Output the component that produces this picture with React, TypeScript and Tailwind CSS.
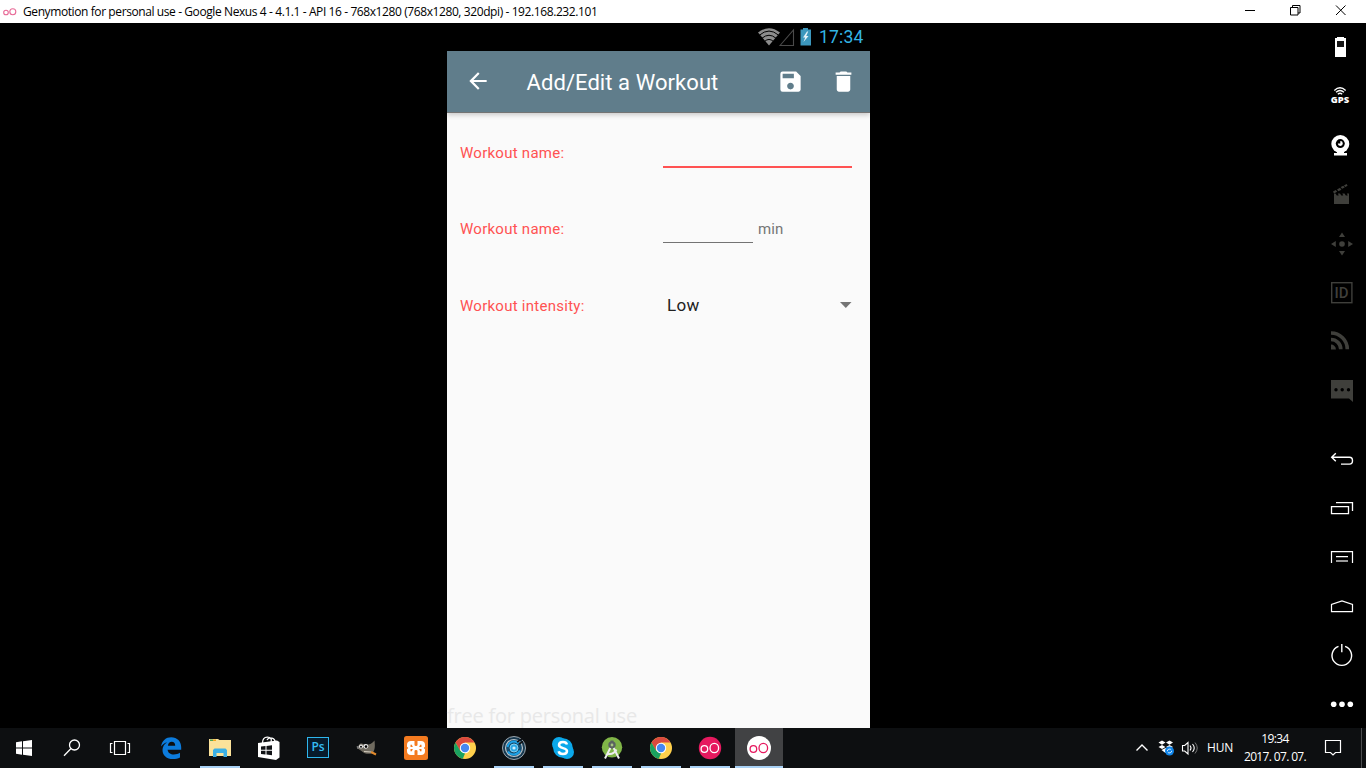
import type { ReactNode } from 'react';
import { MdArrowBack, MdDelete, MdSave } from 'react-icons/md';

function SideIcon({ children }: { children: ReactNode }) {
  return (
    <svg className="block h-[49px] w-6 shrink-0" viewBox="0 0 24 49" fill="none">
      {children}
    </svg>
  );
}

function Sidebar() {
  return (
    <div className="flex w-9 shrink-0 flex-col">
      <SideIcon>
        <path d="M7 14h7v1h2v19H5V15h2z" fill="#fff" />
        <path d="M7 18h7v6H7z" fill="#161616" />
      </SideIcon>
      <SideIcon>
        <path d="M4.3 18.4Q10 13.2 15.7 18.4M6 20.3Q10 16.8 14 20.3M7.8 22.2Q10 20.3 12.2 22.2" stroke="#fff" strokeWidth="1.3" />
        <text x="0.7" y="31.4" textLength="18.4" lengthAdjust="spacingAndGlyphs" fill="#fff" className="font-['Open_Sans',sans-serif] text-[8.4px] font-extrabold">GPS</text>
      </SideIcon>
      <SideIcon>
        <circle cx="10.3" cy="23" r="9" fill="#fff" />
        <path d="M7 30h7v2h3v2.500H4V32h3z" fill="#fff" />
        <circle cx="10.3" cy="22.6" r="4.5" fill="#000" />
        <path d="M10.3 22.6V20a2.5 2.5 0 1 1-2.5 2.6z" fill="#fff" />
      </SideIcon>
      <SideIcon>
        <path d="M4 23.5h1.500l1.300 2h2l-1-2H10l1.300 2h2l-1-2h2.200l1.300 2h2l-1-2H19V34H4z" fill="#3f3f3b" />
        <path d="M3 21.5l2.8-1.5 1.4 1.8-3.200 1.800zM7 19.400l3-1.600 1.400 1.900-3 1.500zM10.700 17l2.600-1.300 1.400 1.800-2.600 1.300zM14 15.400l2.600-1.300 1 1.700-2.400 1.300z" fill="#3f3f3b" />
      </SideIcon>
      <SideIcon>
        <circle cx="12" cy="25" r="2.8" fill="#3f3f3b" />
        <path d="M12 13.500l3 4.500h-6zM12 36.500l3-4.500h-6zM1 25l4.800-3v6zM23 25l-4.800-3v6z" fill="#3f3f3b" />
      </SideIcon>
      <SideIcon>
        <rect x="1.7" y="14.7" width="20.2" height="20" stroke="#3f3f3b" strokeWidth="1.4" />
        <text x="4.500" y="30" textLength="14" lengthAdjust="spacingAndGlyphs" fill="#3f3f3b" className="font-['Roboto',sans-serif] text-[15px] font-medium">ID</text>
      </SideIcon>
      <SideIcon>
        <path d="M1 27.500a4.900 4.900 0 0 1 4.900 4.900H1z" fill="#3f3f3b" />
        <path d="M1 22.500a9.800 9.800 0 0 1 9.800 9.800M1 16a16.300 16.300 0 0 1 16.300 16.300" stroke="#3f3f3b" strokeWidth="3.600" />
      </SideIcon>
      <SideIcon>
        <path d="M1 14h22v22l-4-3.4H1z" fill="#3f3f3b" />
        <g fill="#000"><circle cx="6" cy="23.7" r="1.7" /><circle cx="12.2" cy="23.7" r="1.7" /><circle cx="18.5" cy="23.7" r="1.7" /></g>
      </SideIcon>
      <div className="h-5 shrink-0" />
      <SideIcon>
        <path d="M5.8 18.2L1.7 22.2l4.1 4M2 22.3h17.5q3 0 3 3.4t-3 3.4H11" stroke="#fff" strokeWidth="1.4" />
      </SideIcon>
      <SideIcon>
        <path d="M1.5 22.7h17v7h-17z" stroke="#fff" strokeWidth="1.3" />
        <path d="M6 18.7h16.5V27" stroke="#fff" strokeWidth="1.3" />
      </SideIcon>
      <SideIcon>
        <path d="M1.5 30V18.6h21V30M6 23.7h12" stroke="#fff" strokeWidth="1.2" />
        <path d="M6 28h12" stroke="#aaa" strokeWidth="1.8" />
      </SideIcon>
      <SideIcon>
        <path d="M1.5 29.6v-7.2L12 19l10.5 3.4v7.2z" stroke="#fff" strokeWidth="1.2" />
      </SideIcon>
      <SideIcon>
        <path d="M8.5 15.3a9.8 9.8 0 1 0 6.600 0M11.8 13v8.3" stroke="#fff" strokeWidth="1.4" />
      </SideIcon>
      <SideIcon>
        <g fill="#fff"><circle cx="3.7" cy="24.3" r="2.8" /><circle cx="12" cy="24.3" r="2.8" /><circle cx="20.3" cy="24.3" r="2.8" /></g>
      </SideIcon>
    </div>
  );
}

function Label({ children }: { children: ReactNode }) {
  return <span className="w-[203px] shrink-0 text-[15px] tracking-[0.26px] text-[#ff5252]">{children}</span>;
}

function Phone() {
  return (
    <div className="flex w-[423px] flex-col bg-[#fafafa] font-['Roboto',sans-serif]">
      <div className="flex h-7 shrink-0 items-center justify-end bg-black pr-1.5">
        <svg className="block h-7 w-[62px]" viewBox="0 0 62 28">
          <path d="M5 9.5Q16 .8 27 9.5L16 22.5z" fill="#8c8c8c" />
          <path d="M6.5 12.1Q16 4 25.5 12.1M9 15.2Q16 9.3 23 15.2M11.7 18.3Q16 14.6 20.3 18.3" fill="none" stroke="#000" strokeWidth="1" />
          <path d="M27 22.5L40.500 7v15.500z" fill="none" stroke="#4a4a4a" strokeWidth="1.1" />
          <path d="M50 5h5v1.500h3V22.500H47.500V6.500H50z" fill="#3c97bd" />
          <path d="M54 8.500L50 14.500h2.200L50.500 19l5-6h-2.300l2-4.500z" fill="#e4f2f8" />
        </svg>
        <span className="ml-1 w-[45px] whitespace-nowrap text-[17.500px] leading-7 tracking-[0.2px] text-[#33b5e5]">17:34</span>
      </div>
      <div className="flex h-[62px] shrink-0 items-center border-b border-[#737373] bg-[#607d8b] text-white shadow-[0_2px_5px_rgba(0,0,0,0.2)]">
        <MdArrowBack className="mb-px ml-[18px] h-[26px] w-[26px] shrink-0" />
        <span className="ml-[35.500px] mt-0.5 w-[240px] whitespace-nowrap text-[22px] tracking-[0.07px]">Add/Edit a Workout</span>
        <MdSave className="ml-[10.500px] h-[27px] w-[27px] shrink-0" />
        <MdDelete className="ml-[26px] h-[27px] w-[27px] shrink-0" />
      </div>
      <div className="flex h-[76px] shrink-0 items-center pl-[13px] pt-1">
        <Label>Workout name:</Label>
        <div className="mt-[28px] h-0.5 w-[189px] bg-[#ff5252]" />
      </div>
      <div className="flex h-[76px] shrink-0 items-center pl-[13px] pt-1">
        <Label>Workout name:</Label>
        <div className="mt-[27px] h-px w-[90px] bg-[#737373]" />
        <span className="ml-[5px] text-[15px] tracking-[0.1px] text-[#757575]">min</span>
      </div>
      <div className="flex h-[77px] shrink-0 items-center pl-[13px] pt-[5px]">
        <Label>Workout intensity:</Label>
        <span className="ml-1 w-[173px] text-[17px] tracking-[0.3px] text-[#212121]">Low</span>
        <svg className="mb-[3px] block h-1.5 w-3" viewBox="0 0 12 6"><path d="M0 0h11.500L5.800 6z" fill="#757575" /></svg>
      </div>
      <div className="mt-auto h-[26px] whitespace-nowrap font-['Open_Sans',sans-serif] text-[20px] font-medium leading-[28px] tracking-[-0.22px] text-[#e8e8e8]">free for personal use</div>
    </div>
  );
}

function Chrome() {
  return (
    <svg className="block h-6 w-6" viewBox="0 0 24 24">
      <circle cx="12" cy="12" r="11" fill="#ffd04c" />
      <path d="M2.500 6.500a11 11 0 0 1 19 0H12L7 14.800z" fill="#db4a3e" />
      <path d="M2.500 6.500L7.200 14.800 12 17.500l-2.200 5.300A11 11 0 0 1 2.500 6.500z" fill="#1aa260" />
      <circle cx="12" cy="12" r="5.200" fill="#fff" />
      <circle cx="12" cy="12" r="4.200" fill="#4688f1" />
    </svg>
  );
}

function Genymotion({ active }: { active?: boolean }) {
  return (
    <svg className="block h-6 w-6" viewBox="0 0 24 24">
      <circle cx="12" cy="12" r={active ? 12 : 11.2} fill={active ? '#fff' : '#e6195f'} />
      <g fill="none" stroke={active ? '#e6195f' : '#fff'} strokeWidth="1.300"><circle cx="6.400" cy="13" r="3.300" /><ellipse cx="16.300" cy="12" rx="4.300" ry="4.600" /></g>
    </svg>
  );
}

function Task({ children, running, active }: { children: ReactNode; running?: boolean; active?: boolean }) {
  return (
    <div className={active ? 'flex h-10 w-12 flex-col items-center bg-[#414244]' : 'flex h-10 w-12 flex-col items-center'}>
      <div className="flex h-[38px] items-center pt-0.5">{children}</div>
      {running && <div className={active ? 'h-0.5 w-12 bg-[#a9d1f5]' : 'h-0.5 w-10 bg-[#a9d1f5]'} />}
    </div>
  );
}

function Taskbar() {
  return (
    <div className="flex h-10 shrink-0 justify-between bg-[#0d0f11]">
      <div className="flex">
        <Task>
          <svg className="block h-6 w-6" viewBox="0 0 24 24" fill="#fff"><path d="M4 6.200l6-.9v6.200H4zM11 5.200L20 4v7.500h-9zM4 12.500h6v6.200l-6-.9zM11 12.500h9V20l-9-1.200z" /></svg>
        </Task>
        <Task>
          <svg className="block h-6 w-6" viewBox="0 0 24 24" fill="none" stroke="#fff" strokeWidth="1.300"><circle cx="14.500" cy="9" r="5" /><path d="M11 12.500L4 19.700" /></svg>
        </Task>
        <Task>
          <svg className="block h-6 w-6" viewBox="0 0 24 24" fill="none" stroke="#fff" strokeWidth="1.200"><path d="M6.500 5.500h11v13h-11zM4.500 7.500h-2v9h2M19.500 7.500h2v9h-2" /></svg>
        </Task>
        <div className="ml-[3px] flex gap-px">
          <Task>
            <svg className="block h-6 w-6" viewBox="0 0 24 24"><path d="M2 10.500C3 4.500 7 1.200 12.200 1.200c6 0 10 4.200 10 10v2.600H8.600c.3 3.200 3 4.700 6.200 4.700 2.400 0 4.500-.7 6.200-1.700v4.600c-2 1.100-4.500 1.700-7 1.700C7.600 23.100 3.500 19.500 3.500 14c0-3.400 1.800-6.100 4.600-7.600C6 6.500 3.700 8 2 10.500zm6.900-.7h7.300c0-2.700-1.300-4-3.500-4-2 0-3.500 1.500-3.800 4z" fill="#0c7bdc" /></svg>
          </Task>
          <Task running>
            <svg className="block h-6 w-6" viewBox="0 0 24 24"><path d="M1 3h9l1.500 1H23v16H1z" fill="#fbe29a" /><path d="M2 3.500h3v1.500H2z" fill="#50a654" /><path d="M5 3.500h3v1.500H5z" fill="#f3a61d" /><path d="M5 21v-7l1.500-1.500h11L19 14v7h-3.500v-4h-7v4z" fill="#3cb0e5" /></svg>
          </Task>
          <Task>
            <svg className="block h-6 w-6" viewBox="0 0 24 24"><path d="M5.500 7Q5.500 1 10.500 1.200T14 6M10 4q1.500-3 5-1.800t3 4.300" fill="none" stroke="#fff" strokeWidth="1.300" /><path d="M1 7l19-2.500 2.500 1.500v15.500L19 24 1 21z" fill="#fff" /><path d="M4 10.500l4.500-.5v3.700H4zM9.500 9.900l5.500-.6v4.400H9.500zM4 14.700h4.500v3.700L4 17.900zM9.500 14.700H15v4.500l-5.500-.6z" fill="#111316" /></svg>
          </Task>
          <Task>
            <div className="mb-0.5 flex h-[21px] w-[22px] items-center justify-center border-[1.500px] border-[#2eb6ed] bg-[#071b2b] font-['Open_Sans',sans-serif] text-[12px] font-semibold leading-none text-[#35bff5]">Ps</div>
          </Task>
          <Task>
            <svg className="block h-6 w-6" viewBox="0 0 24 24"><path d="M4 9c1-2 3-2 5-.5 4 1 8-.5 10.500-4 .5 5 1 9-2 12.500-3 1.500-8 1.200-11-2L2 12z" fill="#6f6a5f" /><circle cx="6" cy="10.500" r="2" fill="#eee" /><circle cx="10.800" cy="10.300" r="2.400" fill="#eee" /><circle cx="6" cy="10.800" r="1" /><circle cx="11" cy="10.600" r="1.300" /><path d="M1.500 10.500a1.500 1.500 0 1 1 1 2.500z" fill="#777" /><path d="M9 15.500l7 .5" stroke="#d4cec0" strokeWidth="1.200" /><path d="M16 16l5 2.500" stroke="#e38b2d" strokeWidth="2" /></svg>
          </Task>
          <Task>
            <svg className="block h-6 w-6" viewBox="0 0 24 24">
              <rect width="24" height="24" rx="2.500" fill="#f47b20" />
              <rect x="3" y="5" width="18" height="14" rx="4" fill="#fff" />
              <path d="M3 10.800l1.300 1.200L3 13.200zM21 10.800L19.700 12l1.300 1.200zM10.500 4.500h3V9q0 1-1.500 1t-1.500-1zM10.500 19.500h3V15q0-1-1.500-1t-1.500 1z" fill="#f47b20" />
              <path d="M6.500 8.800H8q0 1.700 1.200 2.200H6.500zM17.500 8.800H16q0 1.700-1.200 2.200h2.700zM6.500 15.200H8q0-1.700 1.200-2.200H6.500zM17.500 15.200H16q0-1.700-1.200-2.200h2.700z" fill="#f47b20" />
            </svg>
          </Task>
          <Task><Chrome /></Task>
          <Task running>
            <svg className="block h-6 w-6" viewBox="0 0 24 24"><circle cx="12" cy="12" r="11.500" fill="#16384f" stroke="#9da7af" /><circle cx="12" cy="12" r="8.500" fill="#174e70" stroke="#b9c2c8" strokeWidth="1.200" /><path d="M5.500 11a6.500 6.500 0 0 1 11-3.500M6 15.500a7 7 0 0 0 12-1" fill="none" stroke="#1ca2e8" strokeWidth="2" /><circle cx="12" cy="12" r="4" fill="#29a7e6" stroke="#83cff1" /><circle cx="12" cy="12" r="1.600" fill="#cfedfb" /><path d="M15 6l5-3M17 8l4-2.500" stroke="#0d1115" strokeWidth="1.500" /></svg>
          </Task>
          <Task running>
            <svg className="block h-6 w-6" viewBox="0 0 24 24"><rect x="1" y="1" width="14" height="14" rx="7" fill="#0ba8ea" /><rect x="9" y="9" width="14" height="14" rx="7" fill="#0ba8ea" /><circle cx="12" cy="12" r="9.800" fill="#0ba8ea" /><path d="M16 8.500C15.500 6.800 14 6 12 6 9.500 6 8 7.200 8 9c0 4 8 2.200 8 6 0 1.800-1.500 3-4 3-2.200 0-4-.9-4.300-2.800" fill="none" stroke="#fff" strokeWidth="2.500" /></svg>
          </Task>
          <Task running>
            <svg className="block h-6 w-6" viewBox="0 0 24 24"><circle cx="12" cy="11.300" r="10.200" fill="#80b548" /><path d="M12 4.500v3" stroke="#5a6260" strokeWidth="3" /><circle cx="12" cy="9" r="3.700" fill="#5a6260" /><circle cx="12" cy="9" r="1.400" fill="#a7c482" /><path d="M10.300 12L5 22.500M13.700 12L19 22.500" stroke="#eee" strokeWidth="2" /><path d="M7 17.500q6 2 9.500-4" fill="none" stroke="#eee" strokeWidth="2" /></svg>
          </Task>
          <Task running><Chrome /></Task>
          <Task running><Genymotion /></Task>
          <Task running active><Genymotion active /></Task>
        </div>
      </div>
      <div className="flex items-center font-['Open_Sans',sans-serif] text-[12px] text-white">
        <svg className="block h-6 w-[66px]" viewBox="0 0 66 24">
          <path d="M2.500 14.500L8 9l5.500 5.500" fill="none" stroke="#fff" strokeWidth="1.400" />
          <path d="M24.500 6.500L28 4.500l3.500 2L28 8.700zM32 6.500l3.500-2 3.500 2-3.500 2.200zM24.500 11L28 9l3.500 2-3.500 2zM32 11l3.500-2 3.500 2-3.500 2zM27.500 14l4-2 4 2-4 3z" fill="#fff" />
          <circle cx="35.500" cy="15" r="4.500" fill="#0e83e8" /><path d="M33.300 15a2.200 2.200 0 0 1 4-1M37.700 15a2.200 2.200 0 0 1-4 1" fill="none" stroke="#fff" strokeWidth=".8" />
          <path d="M48.500 9.500h2.200l3.300-3v11.500l-3.300-3h-2.200zM56 9.500q2 2.500 0 5M58.500 8q3.500 4 0 8" fill="none" stroke="#fff" strokeWidth="1.100" /><path d="M61 6.500q4.500 5.500 0 11" fill="none" stroke="#777" strokeWidth="1" />
        </svg>
        <span className="ml-[7px] w-[35px] whitespace-nowrap tracking-[-0.2px]">HUN</span>
        <div className="flex w-[66px] flex-col items-center whitespace-nowrap text-[12px] leading-[18px] tracking-[-0.65px]"><span>19:34</span><span>2017. 07. 07.</span></div>
        <svg className="ml-4 block h-6 w-[18px]" viewBox="0 0 18 24"><path d="M1.500 4.500h15v12H11.500L9 19l-2.500-2.500h-5z" fill="none" stroke="#fff" strokeWidth="1.200" /></svg>
        <div className="ml-[19px] mr-1 h-10 w-px bg-[#4b4c4e]" />
      </div>
    </div>
  );
}

export default function App() {
  return (
    <div className="flex h-screen w-full flex-col overflow-hidden bg-black">
      <div className="flex h-[23px] shrink-0 items-center bg-white pr-5">
        <svg className="ml-[3px] block h-4 w-[14px]" viewBox="0 0 14 16" fill="none" stroke="#e86996" strokeWidth="1.100"><circle cx="3" cy="8.500" r="2.300" /><circle cx="9.800" cy="7.800" r="3" /></svg>
        <span className="ml-1.5 whitespace-nowrap pt-px font-['Open_Sans',sans-serif] text-[12px] tracking-[-0.405px] text-black">Genymotion for personal use - Google Nexus 4 - 4.1.1 - API 16 - 768x1280 (768x1280, 320dpi) - 192.168.232.101</span>
        <svg className="ml-auto block h-[23px] w-[102px]" viewBox="0 0 102 23" fill="none" stroke="#000"><path d="M1 10.500h10M46.500 7.500h7.500v7.500h-7.500zM48.500 7.500v-2h7.500v7.500h-2M92 5.500l9.500 9.500M101.500 5.500L92 15" /></svg>
      </div>
      <div className="flex min-h-0 flex-1">
        <div className="w-[447px] shrink-0" />
        <Phone />
        <div className="flex-1" />
        <Sidebar />
      </div>
      <Taskbar />
    </div>
  );
}
